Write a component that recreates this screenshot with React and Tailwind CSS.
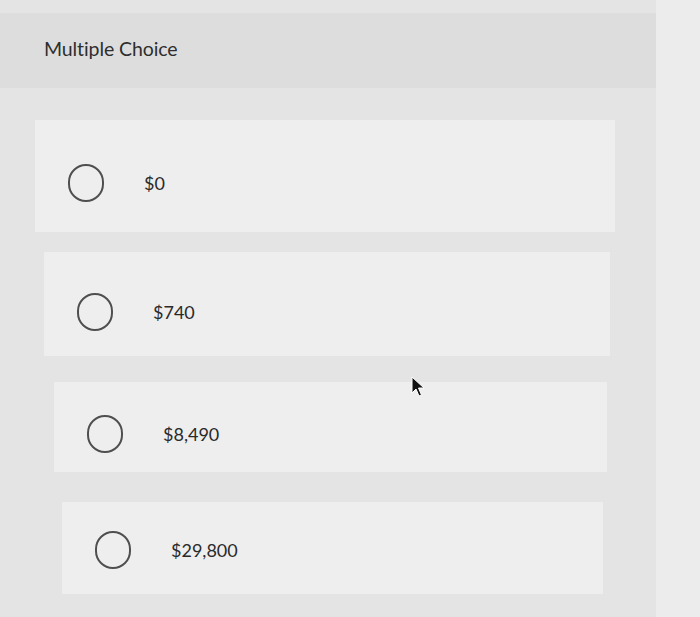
const options = [
	{ label: "$0", box: "ml-[35px] mr-[41px] h-[112px] pt-[14px]" },
	{ label: "$740", box: "mt-[20px] ml-[44px] mr-[46px] h-[104px] pt-[16px]" },
	{ label: "$8,490", box: "mt-[26px] ml-[54px] mr-[49px] h-[90px] pt-[14px]" },
	{ label: "$29,800", box: "mt-[30px] ml-[62px] mr-[53px] h-[92px] pt-[4px]" },
];

const Cursor = () => (
	<svg
		className="absolute left-[410px] top-[376px]"
		width="16"
		height="22"
		viewBox="0 0 16 22">
		<path d="M2 1 L2 17 L6 13 L9 20 L11.5 19 L8.5 12 L14 12 Z" fill="#111" stroke="#fff" strokeWidth="1" />
	</svg>
);

const App = () => {
	return (
		<div
			className="relative flex w-full h-[617px] bg-[#ebebeb] overflow-hidden"
			style={{ fontFamily: "Lato, 'Open Sans', sans-serif" }}>
			<div className="w-[656px] h-full bg-[#e4e4e4] pt-[13px]">
				{/* Header */}
				<div className="h-[75px] bg-[#dddddd] flex items-center pl-[44px] pb-[4px]">
					<h1 className="text-[19.5px] text-[#2e2e2e] tracking-[-0.1px]">Multiple Choice</h1>
				</div>

				{/* Options */}
				<div className="flex flex-col pt-[32px]">
					{options.map((opt, i) => (
						<div
							key={i}
							className={
								"flex items-center bg-[#eeeeee] pl-[33px] gap-[40px] " + opt.box
							}>
							<span className="w-[36px] h-[38px] rounded-full border-2 border-[#4f4f4f] shrink-0" />
							<span className="text-[18px] text-[#2a2a2a]">{opt.label}</span>
						</div>
					))}
				</div>
			</div>
			<div className="flex-1 bg-[#ececec]" />
			<Cursor />
		</div>
	);
};

export default App;
